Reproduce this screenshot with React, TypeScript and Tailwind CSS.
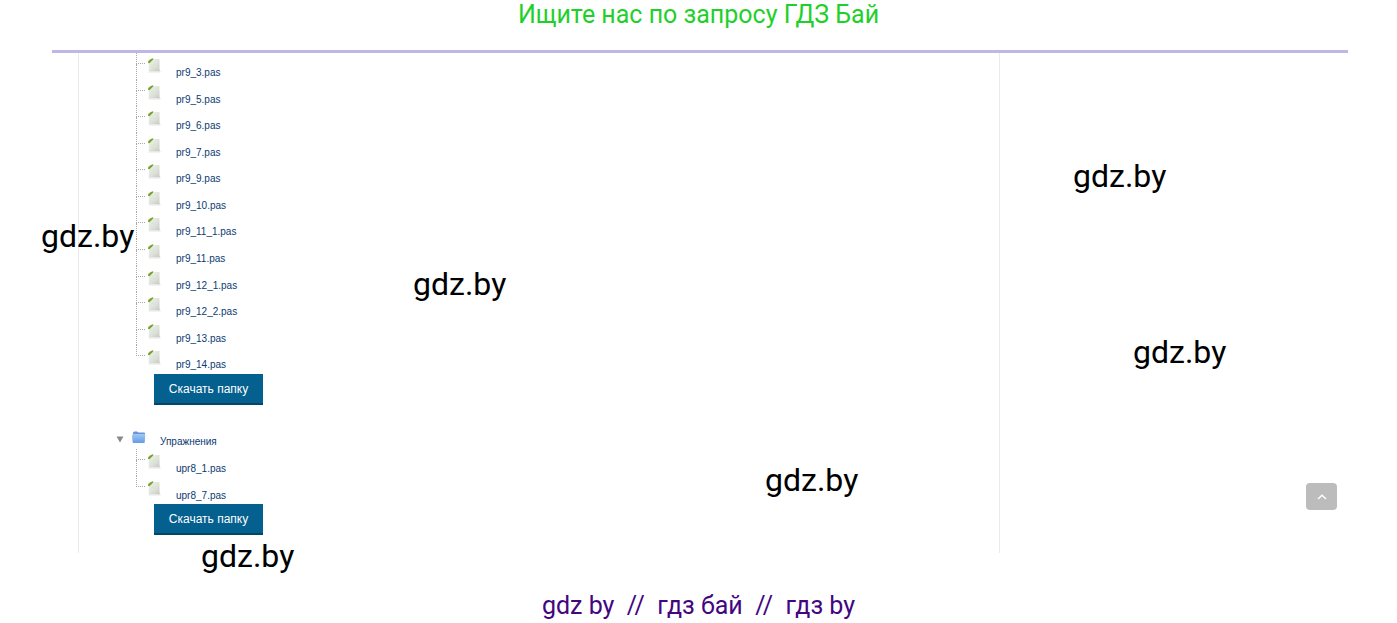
const files = [
  'pr9_3.pas',
  'pr9_5.pas',
  'pr9_6.pas',
  'pr9_7.pas',
  'pr9_9.pas',
  'pr9_10.pas',
  'pr9_11_1.pas',
  'pr9_11.pas',
  'pr9_12_1.pas',
  'pr9_12_2.pas',
  'pr9_13.pas',
  'pr9_14.pas',
];
const exercises = ['upr8_1.pas', 'upr8_7.pas'];

function FileIcon() {
  return (
    <svg width="14" height="15" viewBox="0 0 14 15" aria-hidden="true" className="mt-[5px] ml-[3px] shrink-0">
      <defs>
        <linearGradient id="sheet" x1="0" y1="0" x2="1" y2="1">
          <stop offset="0" stopColor="#f1f3ee" />
          <stop offset="0.5" stopColor="#dfe3dc" />
          <stop offset="1" stopColor="#c3c6c3" />
        </linearGradient>
      </defs>
      <path d="M4.500 1H11.500V12L12.500 13.500H.8V5Z" fill="url(#sheet)" />
      <path d="M3 6.500H10M2.500 9H10" stroke="#dbe6d0" strokeWidth="1.200" />
      <path d="M.5 14H12.500" stroke="#e6e6e6" strokeWidth="1" />
      <path d="M0 5C.2 2.500 1.500 .6 5.500 .4C4.800 2.400 3 3.200 1.800 5.200Z" fill="#8fb444" />
      <path d="M.6 4.400L4.800 .8" stroke="#7b9f2f" strokeWidth="1.400" />
    </svg>
  );
}

function FolderIcon() {
  return (
    <svg width="14" height="13" viewBox="0 0 14 13" aria-hidden="true" className="mt-[8px] shrink-0">
      <defs>
        <linearGradient id="folder" x1="0" y1="0" x2="0" y2="1">
          <stop offset="0" stopColor="#a2c8f7" />
          <stop offset="1" stopColor="#649be3" />
        </linearGradient>
      </defs>
      <path d="M1 2Q1 .5 2.500 .5H5L6.500 1.500H12Q13 1.500 13 2.500V5H1Z" fill="#6797d8" />
      <path d="M0 4.500Q0 3 1.500 3H12Q13.300 3 13.200 4L12.800 11Q12.800 12 11.800 12H1.600Q.6 12 .6 11Z" fill="url(#folder)" />
    </svg>
  );
}

function FileRow({ name, last }: { name: string; last: boolean }) {
  return (
    <li className="flex flex-1 items-stretch">
      <span className="flex w-[9px] shrink-0 flex-col">
        <span className="h-[11px] border-b border-l border-dotted border-[#a8a8a8]" />
        {!last && <span className="flex-1 border-l border-dotted border-[#a8a8a8]" />}
      </span>
      <FileIcon />
      <a href={'#' + name} className="mt-[14px] ml-[14px] text-[10px] leading-[12px] text-[#0b3a72]">
        {name}
      </a>
    </li>
  );
}

function DownloadButton() {
  return (
    <button
      type="button"
      className="mt-[2px] ml-[75px] block h-[31px] w-[109px] border-b-2 border-[#044668] bg-[#03608f] pt-px text-[12px] leading-[28px] whitespace-nowrap text-white"
    >
      Скачать папку
    </button>
  );
}

function Mark({ place }: { place: string }) {
  return (
    <span className={'pointer-events-none absolute font-[Roboto,sans-serif] text-[32px] leading-[38px] text-black ' + place}>
      gdz.by
    </span>
  );
}

export default function App() {
  return (
    <div className="relative bg-white font-['Liberation_Sans',Arial,sans-serif]">
      <header className="h-[50px] text-center font-[Roboto,sans-serif] text-[25px] leading-[29px] text-[#1fd02b]">
        Ищите нас по запросу ГДЗ Бай
      </header>

      <div className="mr-[49px] ml-[52px] border-t-[3px] border-[#bdb6e6]">
        <main className="ml-[26px] w-[922px] max-w-full border-x border-[#ebebeb] pb-[18px]">
          <ul className="ml-[57px] flex h-[319px] flex-col">
            {files.map((name, i) => (
              <FileRow key={name} name={name} last={i === files.length - 1} />
            ))}
          </ul>
          <DownloadButton />

          <div className="mt-[18px] ml-[37px] flex h-[26px] items-start">
            <svg width="8" height="7" viewBox="0 0 8 7" aria-hidden="true" className="mt-[13px]">
              <path d="M.5 .5H7.500L4 6.500Z" fill="#8a8a8a" />
            </svg>
            <span className="ml-[8px]">
              <FolderIcon />
            </span>
            <a href="#exercises" className="mt-[13px] ml-[14px] text-[10px] leading-[12px] text-[#0b3a72]">
              Упражнения
            </a>
          </div>
          <ul className="ml-[57px] flex h-[53px] flex-col">
            {exercises.map((name, i) => (
              <FileRow key={name} name={name} last={i === exercises.length - 1} />
            ))}
          </ul>
          <DownloadButton />
        </main>
      </div>

      <footer className="flex justify-center pt-[39px] pb-[2px] font-[Roboto,sans-serif] text-[25px] leading-[28px] whitespace-pre text-[#43067f]">
        gdz by  //  гдз бай  //  гдз by
      </footer>

      <Mark place="top-[217px] left-[41px]" />
      <Mark place="top-[265px] left-[413px]" />
      <Mark place="top-[157px] left-[1073px]" />
      <Mark place="top-[333px] left-[1133px]" />
      <Mark place="top-[461px] left-[765px]" />
      <Mark place="top-[537px] left-[201px]" />

      <button
        type="button"
        aria-label="Наверх"
        className="absolute top-[483px] right-[60px] flex h-[27px] w-[31px] items-center justify-center rounded-[4px] bg-[#bcbcbc]"
      >
        <svg width="10" height="6" viewBox="0 0 10 6" aria-hidden="true">
          <path d="M1 5L5 1.200L9 5" fill="none" stroke="#fff" strokeWidth="1.500" />
        </svg>
      </button>
    </div>
  );
}
